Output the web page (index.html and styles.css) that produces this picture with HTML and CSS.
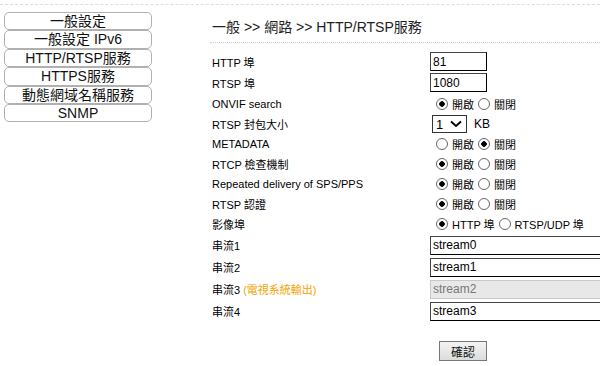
FILE: index.html
```html
<!DOCTYPE html>
<html lang="zh-Hant">
<head>
    <meta charset="UTF-8">
    <title>HTTP/RTSP服務</title>
    <link rel="stylesheet" href="styles.css">
</head>
<body>
    <div class="topline"></div>
    <div class="page">
        <div class="menu">
            <div class="menu-button">一般設定</div>
            <div class="menu-button">一般設定 IPv6</div>
            <div class="menu-button">HTTP/RTSP服務</div>
            <div class="menu-button">HTTPS服務</div>
            <div class="menu-button">動態網域名稱服務</div>
            <div class="menu-button">SNMP</div>
        </div>

        <div class="main">
            <h1>一般 &gt;&gt; 網路 &gt;&gt; HTTP/RTSP服務</h1>
            <div class="form">
                <div class="row">
                    <div class="label">HTTP 埠</div>
                    <div class="field"><input class="short" type="text" value="81"></div>
                </div>
                <div class="row">
                    <div class="label">RTSP 埠</div>
                    <div class="field"><input class="short" type="text" value="1080"></div>
                </div>
                <div class="row">
                    <div class="label">ONVIF search</div>
                    <div class="field">
                        <label><input type="radio" name="onvif" checked> 開啟</label>
                        <label><input type="radio" name="onvif"> 關閉</label>
                    </div>
                </div>
                <div class="row short-row">
                    <div class="label">RTSP 封包大小</div>
                    <div class="field">
                        <select class="size"><option>1</option></select>
                        <span class="unit">KB</span>
                    </div>
                </div>
                <div class="row short-row">
                    <div class="label">METADATA</div>
                    <div class="field">
                        <label><input type="radio" name="meta"> 開啟</label>
                        <label><input type="radio" name="meta" checked> 關閉</label>
                    </div>
                </div>
                <div class="row short-row">
                    <div class="label">RTCP 檢查機制</div>
                    <div class="field">
                        <label><input type="radio" name="rtcp" checked> 開啟</label>
                        <label><input type="radio" name="rtcp"> 關閉</label>
                    </div>
                </div>
                <div class="row short-row">
                    <div class="label">Repeated delivery of SPS/PPS</div>
                    <div class="field">
                        <label><input type="radio" name="sps" checked> 開啟</label>
                        <label><input type="radio" name="sps"> 關閉</label>
                    </div>
                </div>
                <div class="row short-row">
                    <div class="label">RTSP 認證</div>
                    <div class="field">
                        <label><input type="radio" name="auth" checked> 開啟</label>
                        <label><input type="radio" name="auth"> 關閉</label>
                    </div>
                </div>
                <div class="row short-row">
                    <div class="label">影像埠</div>
                    <div class="field">
                        <label><input type="radio" name="port" checked> HTTP 埠</label>
                        <label><input type="radio" name="port"> RTSP/UDP 埠</label>
                    </div>
                </div>
                <div class="row tall-row">
                    <div class="label">串流1</div>
                    <div class="field"><input class="long" type="text" value="stream0"></div>
                </div>
                <div class="row tall-row">
                    <div class="label">串流2</div>
                    <div class="field"><input class="long" type="text" value="stream1"></div>
                </div>
                <div class="row tall-row">
                    <div class="label">串流3 <span class="note">(電視系統輸出)</span></div>
                    <div class="field"><input class="long" type="text" value="stream2" disabled></div>
                </div>
                <div class="row tall-row">
                    <div class="label">串流4</div>
                    <div class="field"><input class="long" type="text" value="stream3"></div>
                </div>
            </div>
            <div class="actions">
                <button class="submit">確認</button>
            </div>
        </div>
    </div>
</body>
</html>
```

FILE: styles.css
```css
body {
    margin: 0;
    font-family: "Liberation Sans", "Noto Sans CJK TC", sans-serif;
    font-size: 11px;
    color: #000;
    background: #fff;
    overflow: hidden;
}

.topline {
    margin-top: 4px;
    border-top: 1px dashed #ddd;
}

.page {
    display: flex;
    align-items: flex-start;
}

/* left menu */
.menu {
    width: 148px;
    flex-shrink: 0;
    margin: 7px 0 0 4px;
    display: flex;
    flex-direction: column;
}

.menu-button {
    height: 16.4px;
    line-height: 16px;
    border: 1px solid #b0b0b0;
    border-radius: 5px;
    text-align: center;
    font-size: 14px;
    color: #111;
    background: #fff;
    overflow: hidden;
    cursor: pointer;
}

/* main panel */
.main {
    flex: 1;
    min-width: 0;
    margin-left: 58px;
}

h1 {
    margin: 0;
    padding: 11px 0 0 2px;
    height: 26px;
    font-size: 14px;
    font-weight: normal;
    color: #222;
    border-bottom: 1px dotted #ccc;
}

.form {
    padding-top: 8px;
}

.row {
    display: flex;
    align-items: center;
    height: 21px;
}

.short-row {
    height: 20px;
}

.tall-row {
    height: 22px;
}

.label {
    width: 218px;
    padding-left: 2px;
    flex-shrink: 0;
}

.note {
    color: #f5a300;
}

.field {
    display: flex;
    align-items: center;
    white-space: nowrap;
}

.field label {
    display: flex;
    align-items: center;
}

input[type="text"] {
    height: 19px;
    box-sizing: border-box;
    border: 1px solid #000;
    border-top-color: #444;
    border-left-color: #444;
    padding: 0 2px;
    font-family: "Liberation Sans", sans-serif;
    font-size: 12px;
    color: #000;
    background: #fff;
    outline: none;
}

input.short {
    width: 57px;
}

input.long {
    width: 200px;
}

input[disabled] {
    background: #e8e8e8;
    color: #777;
    border-color: #c8c8c8;
}

input[type="radio"] {
    appearance: none;
    -webkit-appearance: none;
    width: 12px;
    height: 12px;
    margin: 0 4px 0 4px;
    border: 1px solid #666;
    border-radius: 50%;
    background: #fff;
}

.field label:first-child input[type="radio"] {
    margin-left: 6px;
}

input[type="radio"]:checked {
    background: radial-gradient(circle, #000 0 2.5px, #fff 3px);
}

select.size {
    appearance: none;
    -webkit-appearance: none;
    width: 35px;
    height: 18px;
    margin-left: 2px;
    border: 1px solid #333;
    border-radius: 0;
    padding: 0 0 0 3px;
    font-family: "Liberation Sans", sans-serif;
    font-size: 13px;
    background: #fff url("data:image/svg+xml;utf8,<svg xmlns='http://www.w3.org/2000/svg' width='12' height='8'><path d='M1 1.5 L6 6 L11 1.5' fill='none' stroke='black' stroke-width='2'/></svg>") no-repeat right 4px center;
}

.unit {
    margin-left: 7px;
    font-size: 12px;
}

.actions {
    padding: 19px 0 0 229px;
}

.submit {
    width: 48px;
    height: 20px;
    border: 1px solid #777;
    background: linear-gradient(#f4f4f4, #dcdcdc);
    font-family: "Noto Sans CJK TC", sans-serif;
    font-size: 12px;
    padding: 0;
    color: #111;
}
```
